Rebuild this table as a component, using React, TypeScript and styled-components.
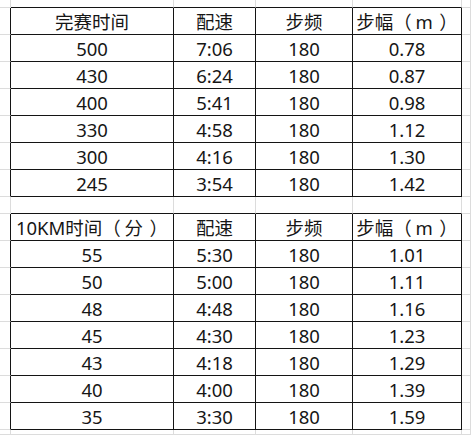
import * as React from 'react';
import styled, { createGlobalStyle } from 'styled-components';

type Line = 'ink' | 'grid';

interface CellProps {
  $right: Line;
  $bottom: Line;
}

const GlobalStyle = createGlobalStyle`
  html, body {
    margin: 0;
    padding: 0;
    background: #ffffff;
  }
  body {
    width: 471px;
    height: 435px;
    overflow: hidden;
  }
`;

const lineColor = (line: Line) => (line === 'ink' ? '#141414' : '#dcdcdc');

const Sheet = styled.div`
  display: grid;
  grid-template-columns: 11px 163px 82px 97px 109px 1fr;
  grid-template-rows: 8px repeat(7, 27px) 17px repeat(8, 27px) 1fr;
  width: 471px;
  height: 435px;
  font-family: 'Noto Sans', 'Noto Sans CJK SC', sans-serif;
  font-size: 18.5px;
  color: #161616;
  background: #ffffff;
`;

const Cell = styled.div<CellProps>`
  box-sizing: border-box;
  display: flex;
  align-items: center;
  justify-content: center;
  padding-top: 2px;
  border-right: 1px solid ${p => lineColor(p.$right)};
  border-bottom: 1px solid ${p => lineColor(p.$bottom)};
  white-space: nowrap;
  line-height: 1;
`;

// the bracketed unit sits loosely between full-width brackets, as in the sheet
const Unit = styled.span`
  padding: 0 0.35em 0 0.2em;
`;

type Content = React.ReactNode;

const sizeHead = (
  <>
    步幅（<Unit>m</Unit>）
  </>
);

const raceTable: Content[][] = [
  ['完赛时间', '配速', '步频', sizeHead],
  ['500', '7:06', '180', '0.78'],
  ['430', '6:24', '180', '0.87'],
  ['400', '5:41', '180', '0.98'],
  ['330', '4:58', '180', '1.12'],
  ['300', '4:16', '180', '1.30'],
  ['245', '3:54', '180', '1.42'],
];

const tenKmTable: Content[][] = [
  [
    <>
      10KM时间（<Unit>分</Unit>）
    </>,
    '配速',
    '步频',
    sizeHead,
  ],
  ['55', '5:30', '180', '1.01'],
  ['50', '5:00', '180', '1.11'],
  ['48', '4:48', '180', '1.16'],
  ['45', '4:30', '180', '1.23'],
  ['43', '4:18', '180', '1.29'],
  ['40', '4:00', '180', '1.39'],
  ['35', '3:30', '180', '1.59'],
];

const COLS = 6;
const blank: Content[] = ['', '', '', ''];

// sheet rows: spacer, table one, gap row, table two, tail
const rows: (Content[] | null)[] = [
  null,
  ...raceTable,
  null,
  ...tenKmTable,
  null,
];

const isData = (r: number, c: number) =>
  r >= 0 && r < rows.length && rows[r] !== null && c >= 1 && c <= 4;

export default function App() {
  return (
    <>
      <GlobalStyle />
      <Sheet>
        {rows.map((row, r) =>
          [...Array(COLS).keys()].map(c => {
            const text = c >= 1 && c <= 4 ? (row ?? blank)[c - 1] : '';
            const right: Line = isData(r, c) || isData(r, c + 1) ? 'ink' : 'grid';
            const bottom: Line = isData(r, c) || isData(r + 1, c) ? 'ink' : 'grid';
            return (
              <Cell key={`${r}-${c}`} $right={right} $bottom={bottom}>
                {text}
              </Cell>
            );
          })
        )}
      </Sheet>
    </>
  );
}
